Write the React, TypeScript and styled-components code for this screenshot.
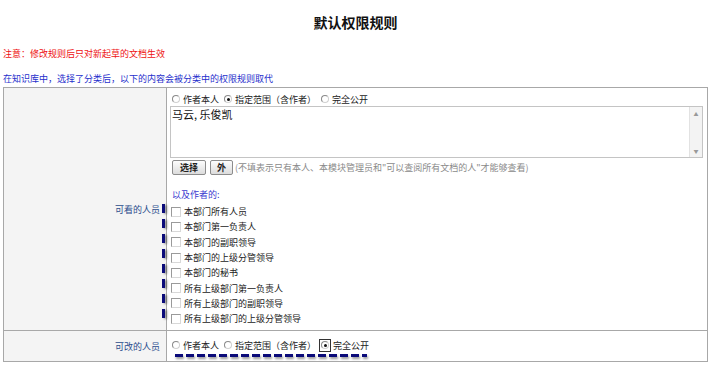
import React from "react";
import styled, { createGlobalStyle } from "styled-components";

const viewOptions = [
  "本部门所有人员",
  "本部门第一负责人",
  "本部门的副职领导",
  "本部门的上级分管领导",
  "本部门的秘书",
  "所有上级部门第一负责人",
  "所有上级部门的副职领导",
  "所有上级部门的上级分管领导",
];

const scopes = ["作者本人", "指定范围（含作者）", "完全公开"];

const ScopeRadios: React.FC<{ name: string; checked: number; framed?: boolean }> = ({
  name,
  checked,
  framed,
}) => (
  <RadioRow>
    {scopes.map((s, i) => (
      <RadioLabel key={s}>
        {framed && i === checked ? (
          <RadioFrame>
            <Radio type="radio" name={name} defaultChecked={i === checked} />
          </RadioFrame>
        ) : (
          <Radio type="radio" name={name} defaultChecked={i === checked} />
        )}
        {s}
      </RadioLabel>
    ))}
  </RadioRow>
);

const App: React.FC = () => {
  return (
    <Page>
      <GlobalStyle />
      <Title>默认权限规则</Title>
      <Note $color="#ee1111">注意：修改规则后只对新起草的文档生效</Note>
      <Note $color="#1f2fcc" $gap={11}>
        在知识库中，选择了分类后，以下的内容会被分类中的权限规则取代
      </Note>

      <Table>
        <tbody>
          <tr>
            <LabelCell>可看的人员</LabelCell>
            <ContentCell>
              <ScopeRadios name="view" checked={1} />
              <TextBox>
                <TextArea defaultValue="马云, 乐俊凯" />
                <ScrollTrack>
                  <Arrow>▲</Arrow>
                  <Arrow>▼</Arrow>
                </ScrollTrack>
              </TextBox>
              <ButtonRow>
                <Btn $w={34}>选择</Btn>
                <Btn $w={23}>外</Btn>
                <Hint>(不填表示只有本人、本模块管理员和"可以查阅所有文档的人"才能够查看)</Hint>
              </ButtonRow>
              <SubTitle>以及作者的:</SubTitle>
              <CheckList>
                {viewOptions.map((o) => (
                  <CheckItem key={o}>
                    <Check type="checkbox" />
                    {o}
                  </CheckItem>
                ))}
              </CheckList>
            </ContentCell>
          </tr>
          <tr>
            <LabelCell>可改的人员</LabelCell>
            <ContentCell $compact>
              <ScopeRadios name="edit" checked={2} framed />
            </ContentCell>
          </tr>
        </tbody>
      </Table>

      <DashV />
      <DashH />
    </Page>
  );
};

export default App;

/* ------------------- Styled Components ------------------- */
const GlobalStyle = createGlobalStyle`
  html, body {
    margin: 0;
    background: #ffffff;
  }
  body {
    font-family: "Noto Sans CJK SC", "Liberation Sans", sans-serif;
    font-size: 9px;
    color: #222;
  }
`;

const Page = styled.div`
  position: relative;
  width: 711px;
  height: 367px;
  padding: 14px 3px 0;
  box-sizing: border-box;
  overflow: hidden;
`;

const Title = styled.div`
  text-align: center;
  font-size: 14px;
  font-weight: 700;
  line-height: 16px;
  height: 16px;
  color: #111;
`;

const Note = styled.div<{ $color: string; $gap?: number }>`
  color: ${(p) => p.$color};
  font-size: 9px;
  line-height: 14px;
  margin-top: ${(p) => (p.$gap !== undefined ? p.$gap : 17)}px;
`;

const Table = styled.table`
  width: 705px;
  margin-top: 1px;
  border-collapse: collapse;
  border: 1px solid #a8a8a8;
`;

const LabelCell = styled.td`
  width: 156px;
  padding: 0 6px 0 0;
  border: 1px solid #a8a8a8;
  background: #f4f4f4;
  text-align: right;
  vertical-align: middle;
  color: #2a4c8c;
  font-size: 9px;
`;

const ContentCell = styled.td<{ $compact?: boolean }>`
  padding: ${(p) => (p.$compact ? "7px 3px 9px" : "4px 4px 4px 3px")};
  border: 1px solid #a8a8a8;
  vertical-align: top;
  background: #fff;
`;

const RadioRow = styled.div`
  display: flex;
  align-items: center;
  height: 14px;
  padding-left: 2px;
  gap: 5px;
`;

const RadioLabel = styled.label`
  display: inline-flex;
  align-items: center;
  gap: 3px;
  font-size: 9px;
  color: #222;
  white-space: nowrap;
`;

const Radio = styled.input`
  appearance: none;
  margin: 0;
  width: 8px;
  height: 8px;
  border-radius: 50%;
  border: 1px solid #8a8a8a;
  border-right-color: #d0d0d0;
  border-bottom-color: #d0d0d0;
  background: #fff;
  position: relative;
  flex: none;

  &:checked::after {
    content: "";
    position: absolute;
    left: 2px;
    top: 2px;
    width: 3px;
    height: 3px;
    border-radius: 50%;
    background: #111;
  }
`;

const RadioFrame = styled.span`
  display: inline-flex;
  align-items: center;
  justify-content: center;
  width: 12px;
  height: 13px;
  margin: 0 -1px 0 -2px;
  border: 1px solid #333;
  box-sizing: border-box;
`;

const TextBox = styled.div`
  display: flex;
  height: 52px;
  margin-top: 0px;
  border: 1px solid #c4c4c4;
  box-sizing: border-box;
`;

const TextArea = styled.textarea`
  flex: 1;
  border: none;
  outline: none;
  resize: none;
  padding: 1px 1px;
  font-family: "Noto Sans CJK SC", "Liberation Sans", sans-serif;
  font-size: 11px;
  line-height: 13px;
  color: #111;
`;

const ScrollTrack = styled.div`
  width: 12px;
  display: flex;
  flex-direction: column;
  justify-content: space-between;
  align-items: center;
  padding: 4px 0 3px;
  background: #f3f3f3;
  border-left: 1px solid #e2e2e2;
`;

const Arrow = styled.span`
  font-size: 5px;
  line-height: 6px;
  color: #999;
`;

const ButtonRow = styled.div`
  display: flex;
  align-items: center;
  gap: 4px;
  margin-top: 2px;
  padding-left: 2px;
`;

const Btn = styled.button<{ $w: number }>`
  width: ${(p) => p.$w}px;
  height: 15px;
  padding: 0;
  border: 1px solid #8c8c8c;
  border-radius: 2px;
  background: linear-gradient(#fdfdfd, #dcdcdc);
  font-family: "Noto Sans CJK SC", "Liberation Sans", sans-serif;
  font-size: 9px;
  font-weight: 700;
  line-height: 13px;
  color: #222;
`;

const Hint = styled.span`
  margin-left: -2px;
  font-size: 9px;
  color: #8a8a8a;
  white-space: nowrap;
`;

const SubTitle = styled.div`
  margin-top: 13px;
  padding-left: 2px;
  font-size: 9px;
  line-height: 14px;
  color: #3b3bd0;
`;

const CheckList = styled.div`
  margin-top: 2px;
  display: flex;
  flex-direction: column;
`;

const CheckItem = styled.label`
  display: flex;
  align-items: center;
  gap: 3px;
  height: 15.3px;
  padding-left: 1px;
  font-size: 9px;
  color: #222;
  white-space: nowrap;
`;

const Check = styled.input`
  appearance: none;
  margin: 0;
  width: 10px;
  height: 10px;
  border: 1px solid #9a9a9a;
  border-right-color: #d8d8d8;
  border-bottom-color: #d8d8d8;
  background: #fff;
  box-sizing: border-box;
  flex: none;
`;

const DashV = styled.div`
  position: absolute;
  left: 162px;
  top: 204px;
  width: 3px;
  height: 119px;
  background: repeating-linear-gradient(
    to bottom,
    #0b0b7a 0 9px,
    transparent 9px 15px
  );
  filter: drop-shadow(2px 1px 1px rgba(0, 0, 0, 0.4));
`;

const DashH = styled.div`
  position: absolute;
  left: 175px;
  top: 354px;
  width: 192px;
  height: 3px;
  background: repeating-linear-gradient(
    to right,
    #0b0b7a 0 8px,
    transparent 8px 11px
  );
  filter: drop-shadow(1px 2px 1px rgba(0, 0, 0, 0.4));
`;
